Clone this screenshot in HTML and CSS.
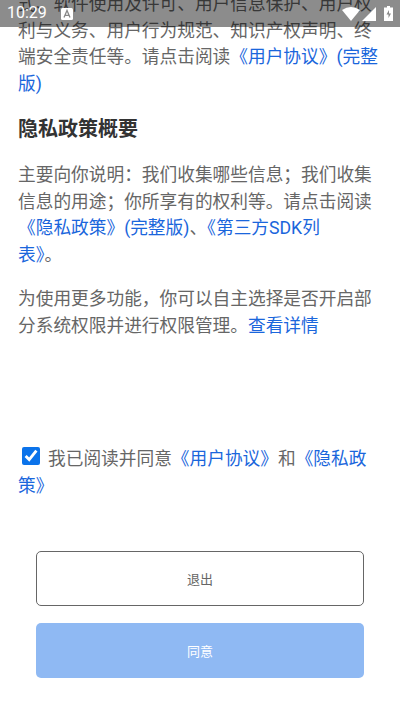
FILE: index.html
```html
<!DOCTYPE html>
<html lang="zh-CN">
<head>
<meta charset="utf-8">
<title>用户协议</title>
<link rel="stylesheet" href="styles.css">
</head>
<body>
<div class="status">
  <span class="time">10:29</span>
  <svg class="app" viewBox="0 0 12 12"><rect width="12" height="12" rx="1.5" fill="#fff"/><path d="M3 9.5 6 2.5 9 9.5M4.2 7.3H7.8" fill="none" stroke="#888" stroke-width="1.3"/></svg>
  <span class="space"></span>
  <svg class="wifi" viewBox="0 0 18 14"><path d="M0 3Q9-3 18 3L9 14Z" fill="#fff"/></svg>
  <svg class="signal" viewBox="0 0 14 14"><path d="M14 0V14H0Z" fill="#fff"/></svg>
  <svg class="battery" viewBox="0 0 9 15"><path d="M3 0H6V1.5H9V15H0V1.5H3Z" fill="#fff"/><path d="M5 4 2.5 8.5H4.5V12L7 7.5H5Z" fill="#888"/></svg>
</div>
<main>
  <p class="first">式、软件使用及许可、用户信息保护、用户权<br>利与义务、用户行为规范、知识产权声明、终<br>端安全责任等。请点击阅读<a>《用户协议》(完整<br>版)</a></p>
  <h2>隐私政策概要</h2>
  <p>主要向你说明：我们收集哪些信息；我们收集<br>信息的用途；你所享有的权利等。请点击阅读<br><a>《隐私政策》(完整版)</a>、<a>《第三方SDK列<br>表》</a>。</p>
  <p class="more">为使用更多功能，你可以自主选择是否开启部<br>分系统权限并进行权限管理。<a>查看详情</a></p>
  <label class="agree"><input type="checkbox" checked>我已阅读并同意<a>《用户协议》</a>和<a>《隐私政<br>策》</a></label>
  <div class="actions"><button class="exit">退出</button><button class="ok">同意</button></div>
</main>
</body>
</html>
```
FILE: styles.css
```css
* { box-sizing: border-box; }
html, body { margin: 0; height: 712px; overflow: hidden; background: #fff; }
body { font-family: Roboto, "Noto Sans CJK SC", sans-serif; font-size: 17.7px; line-height: 26.5px; color: #666; }
.status { position: absolute; top: 0; left: 0; width: 400px; height: 27px; padding: 0 7px; display: flex; align-items: center; background: rgba(0,0,0,.45); color: #fff; }
.time { font-size: 16px; }
.app { width: 12px; height: 12px; margin-left: 14px; }
.space { flex: 1; }
.wifi { width: 18px; height: 14px; margin-right: 2px; }
.signal { width: 14px; height: 14px; margin-right: 8px; }
.battery { width: 9px; height: 15px; }
main { padding: 0 18px; white-space: nowrap; }
p { margin: 0; }
.first { margin-top: -9px; }
h2 { margin: 19px 0; font-size: 20px; line-height: 27px; color: #333; }
.more { margin-top: 18px; }
a { color: #1a66dc; }
.agree { display: block; margin-top: 107px; }
.agree input { width: 18px; height: 18px; margin: 0 8px 0 4px; accent-color: #0b73ea; }
.actions { display: flex; flex-direction: column; gap: 17px; margin: 52px 18px 0; }
button { height: 55px; padding: 0; border: 1px solid #666; border-radius: 5px; background: #fff; font: 13px Roboto, "Noto Sans CJK SC", sans-serif; color: #666; }
.ok { border: 0; background: #8fb9f3; color: #fff; }
```
